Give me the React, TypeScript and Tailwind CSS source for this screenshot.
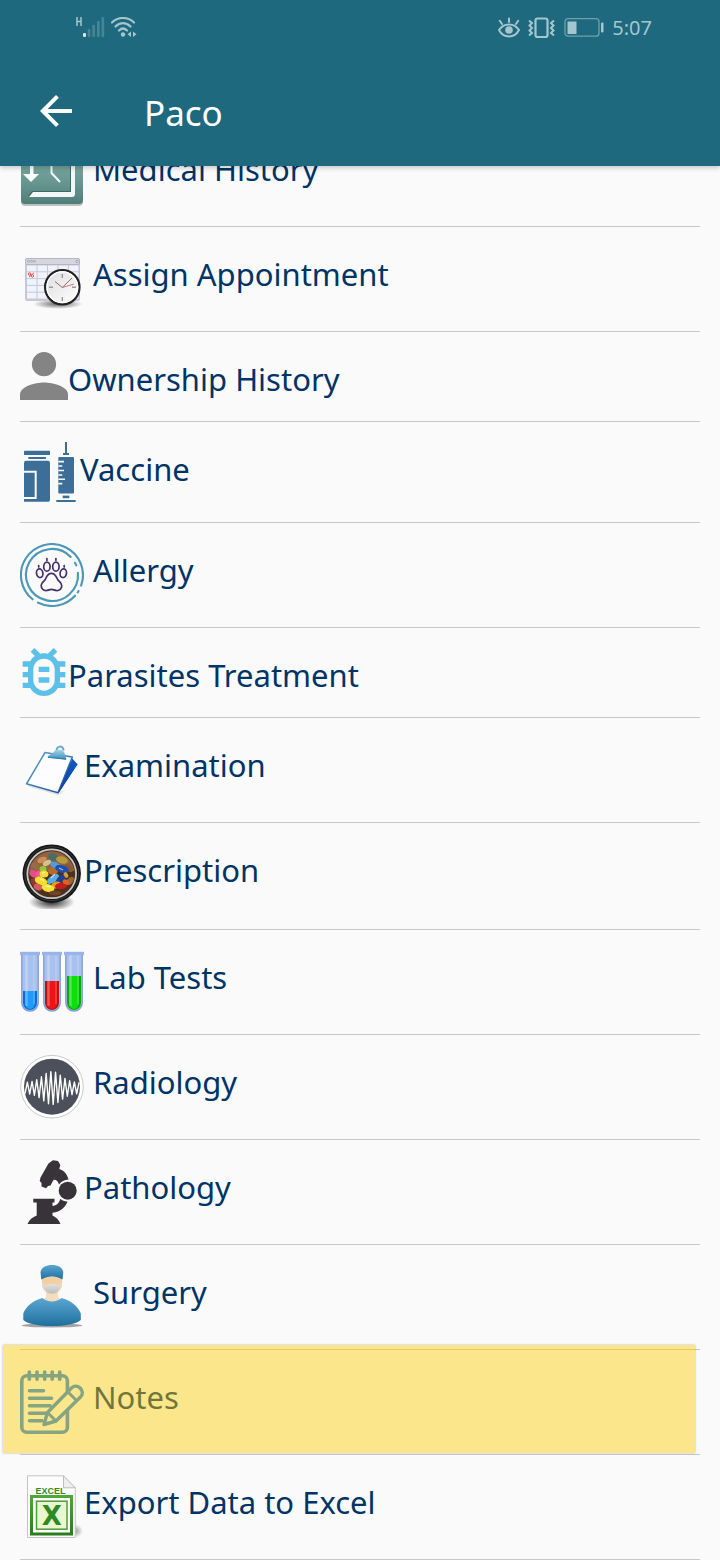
import type { ReactNode } from "react";
import { clsx } from "clsx";

const MedicalHistoryIcon = () => (
  <svg width="64" height="64" viewBox="0 0 64 64" fill="none">
    <defs>
      <linearGradient id="tile" x1="0" y1="0" x2="0" y2="1">
        <stop offset="0" stopColor="#86aea8" />
        <stop offset="0.6" stopColor="#6a9993" />
        <stop offset="1" stopColor="#517d77" />
      </linearGradient>
    </defs>
    <rect x="1" y="2" width="62" height="62" rx="4" fill="#b9c4c2" />
    <rect x="1" y="1" width="62" height="61" rx="4" fill="url(#tile)" />
    <path d="M13 8H52Q55 8 55 11V52Q55 55 52 55H9L13 50H51V12H13Z" fill="#3f6b65" transform="translate(-1 -1)" />
    <path d="M13 8H52Q55 8 55 11V52Q55 55 52 55H9L13 50H51V12H13Z" fill="#f2f8f7" />
    <path d="M10 12H13.5V32H19L11 40L3 32H10Z" fill="#fff" />
    <path d="M31.5 16V31L40 40" stroke="#f2f8f7" strokeWidth="2" />
  </svg>
);

const cellColumns = [7, 17.5, 28, 38.5, 49];
const cellRows = [18.5, 25.3, 32.1, 38.9, 45.7];

const AppointmentIcon = () => (
  <svg width="64" height="64" viewBox="0 0 64 64" fill="none">
    <defs>
      <radialGradient id="softShadow">
        <stop offset="0" stopColor="#333" stopOpacity="0.75" />
        <stop offset="1" stopColor="#333" stopOpacity="0" />
      </radialGradient>
      <linearGradient id="clockFace" x1="0" y1="0" x2="1" y2="1">
        <stop offset="0" stopColor="#ddd" />
        <stop offset="1" stopColor="#fff" />
      </linearGradient>
    </defs>
    <ellipse cx="38" cy="57" rx="25" ry="5" fill="url(#softShadow)" />
    <rect x="5" y="11" width="55" height="43" rx="2" fill="#c5c8d8" />
    <rect x="5.5" y="11.5" width="54" height="6" rx="1.5" fill="#d5d6de" stroke="#b4b6c4" />
    <circle cx="8.5" cy="14.3" r="1" stroke="#9a9ca8" strokeWidth="0.7" />
    <circle cx="11.5" cy="14.3" r="1" stroke="#9a9ca8" strokeWidth="0.7" />
    <circle cx="14.5" cy="14.3" r="1" stroke="#9a9ca8" strokeWidth="0.7" />
    <circle cx="57" cy="14.3" r="1.3" stroke="#9a9ca8" strokeWidth="0.7" />
    {cellRows.map((y) =>
      cellColumns.map((x) => <rect key={`${x}-${y}`} x={x} y={y} width="9.5" height="5.8" fill="#f2f3fa" />),
    )}
    <circle cx="9.5" cy="27" r="1.2" stroke="#e8504a" />
    <circle cx="12.5" cy="29" r="1.2" stroke="#e8504a" />
    <path d="M9 30L14 25.8" stroke="#e8504a" />
    <circle cx="42.3" cy="40.2" r="17.2" fill="url(#clockFace)" stroke="#222" strokeWidth="2.2" />
    <circle cx="42.3" cy="40.2" r="15.4" stroke="#fff" strokeWidth="1.2" />
    <path d="M42.3 27v4M42.3 50v4M29 40.2h4M52 40.2h4" stroke="#999" strokeWidth="1.4" />
    <path d="M35 34.5L42.3 40.5L52 31" stroke="#555" strokeWidth="0.8" />
    <path d="M42.3 40.5L54 37" stroke="#d9534f" strokeWidth="0.8" />
  </svg>
);

const PersonIcon = () => (
  <svg width="48" height="48" viewBox="0 0 48 48" fill="#848484">
    <circle cx="24" cy="12.2" r="12.1" />
    <path d="M0 48V42.5C0 34.5 15 30.5 24 30.5S48 34.5 48 42.5V48Z" />
  </svg>
);

const VaccineIcon = () => (
  <svg width="60" height="60" viewBox="0 0 60 60" fill="#3c6e98">
    <rect x="4" y="8.7" width="26" height="4.4" rx="0.7" />
    <rect x="8.3" y="15" width="17.6" height="2" />
    <path d="M6 18.7H28Q30 18.7 30 21V58Q30 59.8 28.3 59.8H4V21Q4 18.7 6 18.7Z" />
    <path d="M4 29.7H15.7V56H4" fill="none" stroke="#fafafa" strokeWidth="2" />
    <path d="M45 0H47V11H49V13H43V11H45Z" />
    <rect x="38.3" y="15" width="15.7" height="36.5" rx="1" />
    <path
      d="M38.3 19.6H44M38.3 24H42.3M38.3 28.5H44M38.3 33H42.3M38.3 37.3H45M38.3 41.6H42.3"
      stroke="#fafafa"
      strokeWidth="1.6"
    />
    <rect x="42.7" y="53.6" width="6.6" height="2.6" />
    <rect x="36.3" y="58" width="19.4" height="2" />
  </svg>
);

const AllergyIcon = () => (
  <svg width="64" height="64" viewBox="0 0 64 64" fill="none" strokeLinecap="round">
    <g stroke="#4a97b9" strokeWidth="2.1">
      <path d="M12.6 56.3A31 31 0 1 1 61.1 42.6" />
      <path d="M58.5 48L57.7 49.4M55 52.7A31 31 0 0 1 17.9 59.6" />
      <path d="M50.7 13.9A26 26 0 1 0 57.9 29.7" />
      <path d="M55 19.8L56.3 22.4" />
    </g>
    <g stroke="#43306b" strokeWidth="1.7">
      <ellipse cx="19.7" cy="30.2" rx="3.2" ry="4.4" transform="rotate(-10 19.7 30.2)" />
      <ellipse cx="26.9" cy="23.7" rx="3.2" ry="4.5" />
      <ellipse cx="35.9" cy="23.7" rx="3.2" ry="4.5" />
      <ellipse cx="43.3" cy="30.2" rx="3.2" ry="4.4" transform="rotate(10 43.3 30.2)" />
      <path d="M26.9 15.6v1.6M35.9 15.6v1.6M18.7 22.6v1.4M44.2 22.6v1.4" />
      <path d="M31.4 30.4C27.5 30.4 26.8 33.5 25.3 36.4C24.2 38.5 21.4 39.4 21.2 42.5C21 46 23.8 47.9 26.8 47.5C28.6 47.2 29.8 46.3 31.4 46.3S34.4 47.2 36.2 47.5C39.2 47.9 42 46 41.7 42.5C41.4 39.4 38.7 38.5 37.6 36.4C36.1 33.5 35.3 30.4 31.4 30.4Z" />
    </g>
  </svg>
);

const BugIcon = () => (
  <svg width="48" height="48" viewBox="3 3 18 18" fill="#5cc0e8">
    <path d="M20 8h-2.81c-.45-.78-1.07-1.45-1.82-1.96L17 4.41 15.59 3l-2.17 2.17C12.96 5.06 12.49 5 12 5s-.96.06-1.41.17L8.41 3 7 4.41l1.62 1.63C7.88 6.55 7.26 7.22 6.81 8H4v2h2.09c-.05.33-.09.66-.09 1v1H4v2h2v1c0 .34.04.67.09 1H4v2h2.81c1.04 1.79 2.97 3 5.19 3s4.15-1.21 5.19-3H20v-2h-2.09c.05-.33.09-.66.09-1v-1h2v-2h-2v-1c0-.34-.04-.67-.09-1H20V8zm-4 4v3c0 2.21-1.79 4-4 4s-4-1.79-4-4v-4c0-2.21 1.79-4 4-4s4 1.79 4 4v1zm-6 2h4v2h-4zm0-4h4v2h-4z" />
  </svg>
);

const ClipboardIcon = () => (
  <svg width="64" height="64" viewBox="0 0 64 64" fill="none">
    <defs>
      <linearGradient id="boardBack" x1="1" y1="0" x2="0" y2="1">
        <stop offset="0" stopColor="#0a5bc4" />
        <stop offset="1" stopColor="#1340a0" />
      </linearGradient>
      <linearGradient id="boardEdge" x1="0" y1="0" x2="1" y2="1">
        <stop offset="0" stopColor="#5fa9cf" />
        <stop offset="1" stopColor="#1c4c9c" />
      </linearGradient>
      <linearGradient id="boardClip" x1="0" y1="0" x2="0" y2="1">
        <stop offset="0" stopColor="#a9d8ea" />
        <stop offset="1" stopColor="#3a8bb8" />
      </linearGradient>
    </defs>
    <path d="M8 47.5L38 56.5L43 53" stroke="#bbb" strokeWidth="1.5" opacity="0.4" />
    <path d="M51 23L57.5 26.3L38.5 55.3L36 54Z" fill="url(#boardBack)" />
    <path d="M25 14.5L52.3 19L38 54.7L6.5 45.8Z" fill="#fdfdff" stroke="url(#boardEdge)" strokeWidth="1.5" strokeLinejoin="round" />
    <path d="M52.3 20.5L38.5 55L57.5 26.3Z" fill="url(#boardBack)" />
    <path d="M36.5 13C36.5 7.5 43.5 7 43.5 12.5" stroke="#6aa9c6" strokeWidth="2" />
    <path d="M33 14.5C36 10.5 43 10.5 44.5 15L46.5 21.5L27.5 19.5C28 17 31 17 33 14.5Z" fill="url(#boardClip)" />
    <path d="M28 19.3L46 21.3" stroke="#2b7ba9" strokeWidth="1" />
  </svg>
);

// cx, cy, rx, ry, angle, color
const pills: [number, number, number, number, number, string][] = [
  [22, 17, 5, 3, -20, "#c98d55"],
  [33, 14, 5, 4, 10, "#4d6b66"],
  [42, 17, 6, 3.5, 15, "#b79a3c"],
  [15, 23, 5, 3, 30, "#9a6a44"],
  [49, 25, 5, 3, 50, "#8a5a34"],
  [50, 38, 5, 3, -50, "#96673c"],
  [14, 39, 4, 3, 60, "#8c3b3b"],
  [27, 20, 4.5, 2.5, -30, "#d8c08a"],
  [33, 28, 5, 4, 0, "#b56a2e"],
  [35, 22, 5, 3, 20, "#4c9ee0"],
  [42, 26, 7, 3.8, 15, "#1f4fae"],
  [23, 26, 3.5, 3, 0, "#8fc93a"],
  [14, 31, 5, 3.5, 30, "#e64c8b"],
  [19, 31, 3.5, 3.5, 0, "#f0568f"],
  [24, 31, 4.5, 3.5, 0, "#f1dc3a"],
  [33, 36, 7, 3.5, -35, "#58aee6"],
  [41, 36, 6, 3.2, -40, "#1d3f94"],
  [21, 38, 6.5, 4, 20, "#f2e02a"],
  [18, 44, 4.5, 3.2, 20, "#d65a5f"],
  [36, 42, 5, 3.3, -15, "#e0a01d"],
  [41, 43, 6, 3.2, -5, "#c41d1d"],
  [46, 39, 3.5, 2.5, 20, "#e5601f"],
  [28, 45, 6.5, 4, 15, "#f4e236"],
  [46, 32, 3, 2, 60, "#c9a43e"],
  [35, 50, 6, 2.5, 0, "#6e4526"],
];

const PrescriptionIcon = () => (
  <svg width="64" height="66" viewBox="0 0 64 66" fill="none">
    <defs>
      <radialGradient id="bowlShadow">
        <stop offset="0" stopColor="#000" stopOpacity="0.85" />
        <stop offset="1" stopColor="#000" stopOpacity="0" />
      </radialGradient>
      <clipPath id="bowl">
        <circle cx="31.7" cy="31" r="22.8" />
      </clipPath>
    </defs>
    <ellipse cx="31.7" cy="59" rx="23" ry="9" fill="url(#bowlShadow)" />
    <circle cx="31.7" cy="30.6" r="29.2" fill="#161616" />
    <circle cx="31.7" cy="30.6" r="27" stroke="#3c3c3c" strokeWidth="1" />
    <circle cx="31.7" cy="30.8" r="24.4" fill="#4d2f1b" stroke="#c9c7c5" strokeWidth="1.8" />
    <g clipPath="url(#bowl)">
      <rect x="8" y="8" width="48" height="20" fill="#a5704a" opacity="0.8" />
      {pills.map(([cx, cy, rx, ry, angle, color]) => (
        <ellipse key={`${cx}-${cy}`} cx={cx} cy={cy} rx={rx} ry={ry} fill={color} transform={`rotate(${angle} ${cx} ${cy})`} />
      ))}
      <path d="M31 35L35 31M39 25L43 27M20 36L24 37.5M26 43L31 44M22 30L25 29.5" stroke="#fff" strokeWidth="1.2" opacity="0.6" />
    </g>
  </svg>
);

const Tube = ({ x, level, color, dark }: { x: number; level: number; color: string; dark: string }) => (
  <g transform={`translate(${x} 0)`}>
    <path d="M1.7 4H18.3V53A8.3 8.3 0 0 1 1.7 53Z" fill="#a9c1ef" />
    <path d={`M3 ${level}H17V53A7 7 0 0 1 3 53Z`} fill={dark} />
    <path d={`M5 ${level}H15V53A5 6 0 0 1 5 53Z`} fill={color} />
    <path d="M6.5 5V56" stroke="#fff" strokeWidth="2.4" opacity="0.28" />
    <path d="M14 5V54" stroke="#fff" strokeWidth="1.2" opacity="0.25" />
    <path d="M1.8 5V53A8.2 8.2 0 0 0 18.2 53V5" stroke="#7e9bd2" strokeWidth="1.3" fill="none" />
    <rect x="0" y="1.8" width="20" height="3.4" fill="#98b4e8" />
  </g>
);

const LabIcon = () => (
  <svg width="64" height="64" viewBox="0 0 64 64" fill="none">
    <Tube x={0} level={41} color="#1f9bfb" dark="#0c6fd0" />
    <Tube x={22} level={31} color="#ef1414" dark="#b81414" />
    <Tube x={44} level={26} color="#0ce00c" dark="#0ea512" />
  </svg>
);

// peaks get taller towards the middle of the disc
const wave = Array.from({ length: 24 }, (_, i) => {
  const x = 5 + i * 2.35;
  const height = 5.5 + 11 * Math.exp(-(((x - 32) / 13) ** 2));
  return `${x},${33 + (i % 2 ? -height : height)}`;
}).join(" ");

const RadiologyIcon = () => (
  <svg width="64" height="64" viewBox="0 0 64 64" fill="none">
    <circle cx="32" cy="31.7" r="31.3" fill="#fff" stroke="#c9c9c9" strokeWidth="1" />
    <circle cx="32" cy="31.7" r="28" fill="#4c505b" />
    <polyline points={wave} stroke="#fff" strokeWidth="1.4" strokeLinejoin="round" />
  </svg>
);

const MicroscopeIcon = () => (
  <svg width="64" height="64" viewBox="0 0 64 64" fill="#383239">
    <path d="M30.5 2L33 .3L38 1L40.3 5L39.3 9L30.5 25.5L28 26L26 28.3L21.5 26.5L21.5 23L19.7 21L20.5 17.5L28.5 3.5Z" />
    <path d="M38.5 9C42.5 9.5 47 13 48.5 19.5C44.5 19.7 41 21.5 39 24.5C38 21.5 36 18.5 33 20.5Z" />
    <circle cx="47.7" cy="30.7" r="9" />
    <path d="M13.3 38.7H34.5V42.5H32.5V46C36.5 45.5 39 43.5 40.3 38.8C42.5 41 45.5 41.8 47.5 41.5C45.5 47 40.5 52 32.5 52.7V55.5C36 57 39 60 40.5 64H7.5C9 60 12.5 57 16.7 55.5V42.5H13.3Z" />
  </svg>
);

const SurgeonIcon = () => (
  <svg width="64" height="64" viewBox="0 0 64 64" fill="none">
    <defs>
      <linearGradient id="scrubs" x1="0" y1="0" x2="0" y2="1">
        <stop offset="0" stopColor="#5ba6d3" />
        <stop offset="1" stopColor="#1f6f9c" />
      </linearGradient>
      <linearGradient id="mask" x1="0" y1="0" x2="0" y2="1">
        <stop offset="0" stopColor="#e4e4e4" />
        <stop offset="1" stopColor="#bcbcbc" />
      </linearGradient>
    </defs>
    <ellipse cx="32" cy="60.5" rx="30.5" ry="2" fill="#a3a3a3" />
    <path d="M26 24H38V31C38 33 40 34 41 34.5C38 39 26 39 23 34.5C24.5 34 26 33 26 31Z" fill="#f3dcc0" />
    <path d="M22 12H42V19C42 25 37 29 32 29S22 25 22 19Z" fill="#f3cfa4" />
    <path d="M22.5 18.5L26 20Q32 18 38 20L41.5 18.5C41.5 21 39.8 22 39.5 23.5C38.5 27 35 28.5 32 28.5S25.5 27 24.5 23.5C24 22 22.5 21 22.5 18.5Z" fill="url(#mask)" />
    <path d="M20.5 7C21.5 2.5 26 0 32 0S42.5 2.5 43.3 7L42.5 14.5C36 10.5 28 10.5 21.3 14.5Z" fill="url(#scrubs)" />
    <path d="M22.5 33C27 37.5 37 37.5 41.5 33C50 35 58 41 60.8 48.5V55C56 59 45 61 32 61S8 59 3.3 55V48.5C6 41 14 35 22.5 33Z" fill="url(#scrubs)" />
  </svg>
);

const NotesIcon = () => (
  <svg width="64" height="64" viewBox="0 0 64 64" fill="none" stroke="#2585e6" strokeWidth="3.6" strokeLinecap="round" strokeLinejoin="round">
    <rect x="1.8" y="5.8" width="45.6" height="56.4" rx="5" />
    <path d="M9.3 2V9.3M17 2V9.3M24.7 2V9.3M32.2 2V9.3M39.7 2V9.3" />
    <path d="M9.5 20.7H23.5M9.5 28.2H31.5M9.5 35.7H30M9.5 43.2H26M9.5 50.7H22" />
    <path d="M24 54.5L27.5 42.5L51.5 18C57.5 12.5 66 21 60.5 27L36 51Z" fill="#fafafa" strokeWidth="3.4" />
    <path d="M27.5 42.5L36 51M48 22L56.5 30.5" strokeWidth="3" />
  </svg>
);

const ExcelIcon = () => (
  <svg width="64" height="64" viewBox="0 0 64 64" fill="none">
    <defs>
      <linearGradient id="sheet" x1="0" y1="0" x2="0" y2="1">
        <stop offset="0" stopColor="#4fa63a" />
        <stop offset="1" stopColor="#2a7d1d" />
      </linearGradient>
    </defs>
    <ellipse cx="54" cy="56" rx="9" ry="7" fill="url(#softShadow)" opacity="0.7" />
    <path d="M7.5 .8H43.5L55.3 13V62.5H7.5Z" fill="#fcfcfc" stroke="#c4c4c4" />
    <path d="M43.5 .8V12.8H55.3Z" fill="#eee" stroke="#bdbdbd" />
    <text x="15.5" y="18.5" fontFamily="Liberation Sans, Arial, sans-serif" fontWeight="700" fontSize="9" fill="#2f8a1e">
      EXCEL
    </text>
    <rect x="11.5" y="21.5" width="40" height="37.5" stroke="url(#sheet)" strokeWidth="3" />
    <rect x="16.5" y="26.2" width="30.5" height="28" fill="#e9f6cf" stroke="#4d9e38" strokeWidth="1.5" />
    <text x="31.7" y="49.5" textAnchor="middle" fontFamily="DejaVu Sans, sans-serif" fontWeight="700" fontSize="26" fill="#2f8a22">
      X
    </text>
  </svg>
);

type Row = {
  label: string;
  icon: ReactNode;
  spaced?: boolean;
  highlighted?: boolean;
};

const rows: Row[] = [
  { label: "Medical History", icon: <MedicalHistoryIcon />, spaced: true },
  { label: "Assign Appointment", icon: <AppointmentIcon />, spaced: true },
  { label: "Ownership History", icon: <PersonIcon /> },
  { label: "Vaccine", icon: <VaccineIcon /> },
  { label: "Allergy", icon: <AllergyIcon />, spaced: true },
  { label: "Parasites Treatment", icon: <BugIcon /> },
  { label: "Examination", icon: <ClipboardIcon /> },
  { label: "Prescription", icon: <PrescriptionIcon /> },
  { label: "Lab Tests", icon: <LabIcon />, spaced: true },
  { label: "Radiology", icon: <RadiologyIcon />, spaced: true },
  { label: "Pathology", icon: <MicroscopeIcon /> },
  { label: "Surgery", icon: <SurgeonIcon />, spaced: true },
  { label: "Notes", icon: <NotesIcon />, spaced: true, highlighted: true },
  { label: "Export Data to Excel", icon: <ExcelIcon /> },
];

const StatusBar = () => (
  <div className="flex h-14 items-center justify-between pl-[76px] pr-[68px] text-[#a3c6cf]">
    <div className="flex items-center gap-1.5">
      <svg width="29" height="22" viewBox="0 0 29 22" fill="currentColor">
        <path d="M1 0V9M5 0V9M1 4.5H5" stroke="currentColor" strokeWidth="1.5" fill="none" />
        <rect x="7" y="16" width="3" height="4" rx="1" fill="#d5e6ea" />
        <g opacity="0.3">
          <rect x="11.7" y="12" width="2.7" height="8" rx="1" />
          <rect x="16.3" y="8" width="2.7" height="12" rx="1" />
          <rect x="21" y="4" width="2.7" height="16" rx="1" />
          <rect x="25.5" y="0" width="2.7" height="20" rx="1" />
        </g>
      </svg>
      <svg width="26" height="22" viewBox="0 0 26 22" fill="none" stroke="currentColor" strokeWidth="2.2" strokeLinecap="round">
        <path d="M1 5.5C7.5 -0.5 16.5 -0.5 23 5.5M4.5 9.5C9 5 15 5 19.5 9.5M8 13.5C10.5 11 13.5 11 16 13.5" />
        <circle cx="12" cy="17.5" r="2.2" fill="currentColor" stroke="none" />
        <path d="M20 14.5V20L16.5 17.3ZM22 14.5V20L25.5 17.3Z" fill="currentColor" stroke="none" />
      </svg>
    </div>
    <div className="flex items-center gap-2">
      <svg width="22" height="22" viewBox="0 0 22 22" fill="none" stroke="currentColor" strokeWidth="2" strokeLinecap="round">
        <path d="M1 13C5.5 5.5 16.5 5.5 21 13C16.5 21.5 5.5 21.5 1 13Z" />
        <circle cx="11" cy="13" r="3.8" fill="currentColor" stroke="none" />
        <path d="M11 1.5V5M1.8 3.8L4 7M20.2 3.8L18 7" />
      </svg>
      <svg width="27" height="22" viewBox="0 0 27 22" fill="none" stroke="currentColor" strokeWidth="2">
        <rect x="7.5" y="1.5" width="12" height="18.5" rx="2" strokeWidth="2.2" />
        <path d="M1 3.5L4 6L1.5 8.5L4 11L1.5 13.5L4 16L1 18.5M26 3.5L23 6L25.5 8.5L23 11L25.5 13.5L23 16L26 18.5" />
      </svg>
      <svg width="41" height="22" viewBox="0 0 41 22" fill="none">
        <rect x="2" y="1.7" width="34" height="17.5" rx="3" stroke="currentColor" strokeOpacity="0.6" strokeWidth="1.3" />
        <rect x="4.5" y="4.5" width="9" height="12.5" fill="currentColor" />
        <rect x="38" y="5.5" width="2.5" height="10" rx="1" fill="currentColor" />
      </svg>
      <span className="text-xl">5:07</span>
    </div>
  </div>
);

const ListRow = ({ label, icon, spaced, highlighted }: Row) => (
  <li className="relative">
    <button type="button" className="flex w-full items-start border-b border-[#c8c8c8] py-5 text-left">
      <span className="shrink-0">{icon}</span>
      <span className={clsx("pt-[7px] pb-[2px] text-[31px] leading-10", spaced && "ml-[9px]")}>{label}</span>
    </button>
    {/* marker stroke over the row */}
    {highlighted && (
      <div className="pointer-events-none absolute -left-[17px] -top-[5px] right-[5px] bottom-[2px] bg-[#ffcc00]/44 shadow-[0_0_2px_rgba(0,0,0,0.3)]" />
    )}
  </li>
);

export default function App() {
  return (
    <div className="min-h-screen overflow-hidden bg-[#fafafa] font-['Noto_Sans','Open_Sans',sans-serif] text-[#003366]">
      <header className="relative z-10 bg-[#1e697d] text-white shadow-[0_2px_5px_rgba(0,0,0,0.2)]">
        <StatusBar />
        <div className="flex h-[110px] items-center px-8">
          <button type="button" aria-label="Back">
            <svg width="48" height="48" viewBox="0 0 24 24" fill="currentColor">
              <path d="M20 11H7.83l5.59-5.59L12 4l-8 8 8 8 1.41-1.41L7.83 13H20v-2z" />
            </svg>
          </button>
          <h1 className="ml-16 pt-1 text-[35px] leading-12">Paco</h1>
        </div>
      </header>
      {/* the list is scrolled, part of the first row sits under the header */}
      <ul className="-mt-11 px-5">
        {rows.map((row) => (
          <ListRow key={row.label} {...row} />
        ))}
      </ul>
    </div>
  );
}
